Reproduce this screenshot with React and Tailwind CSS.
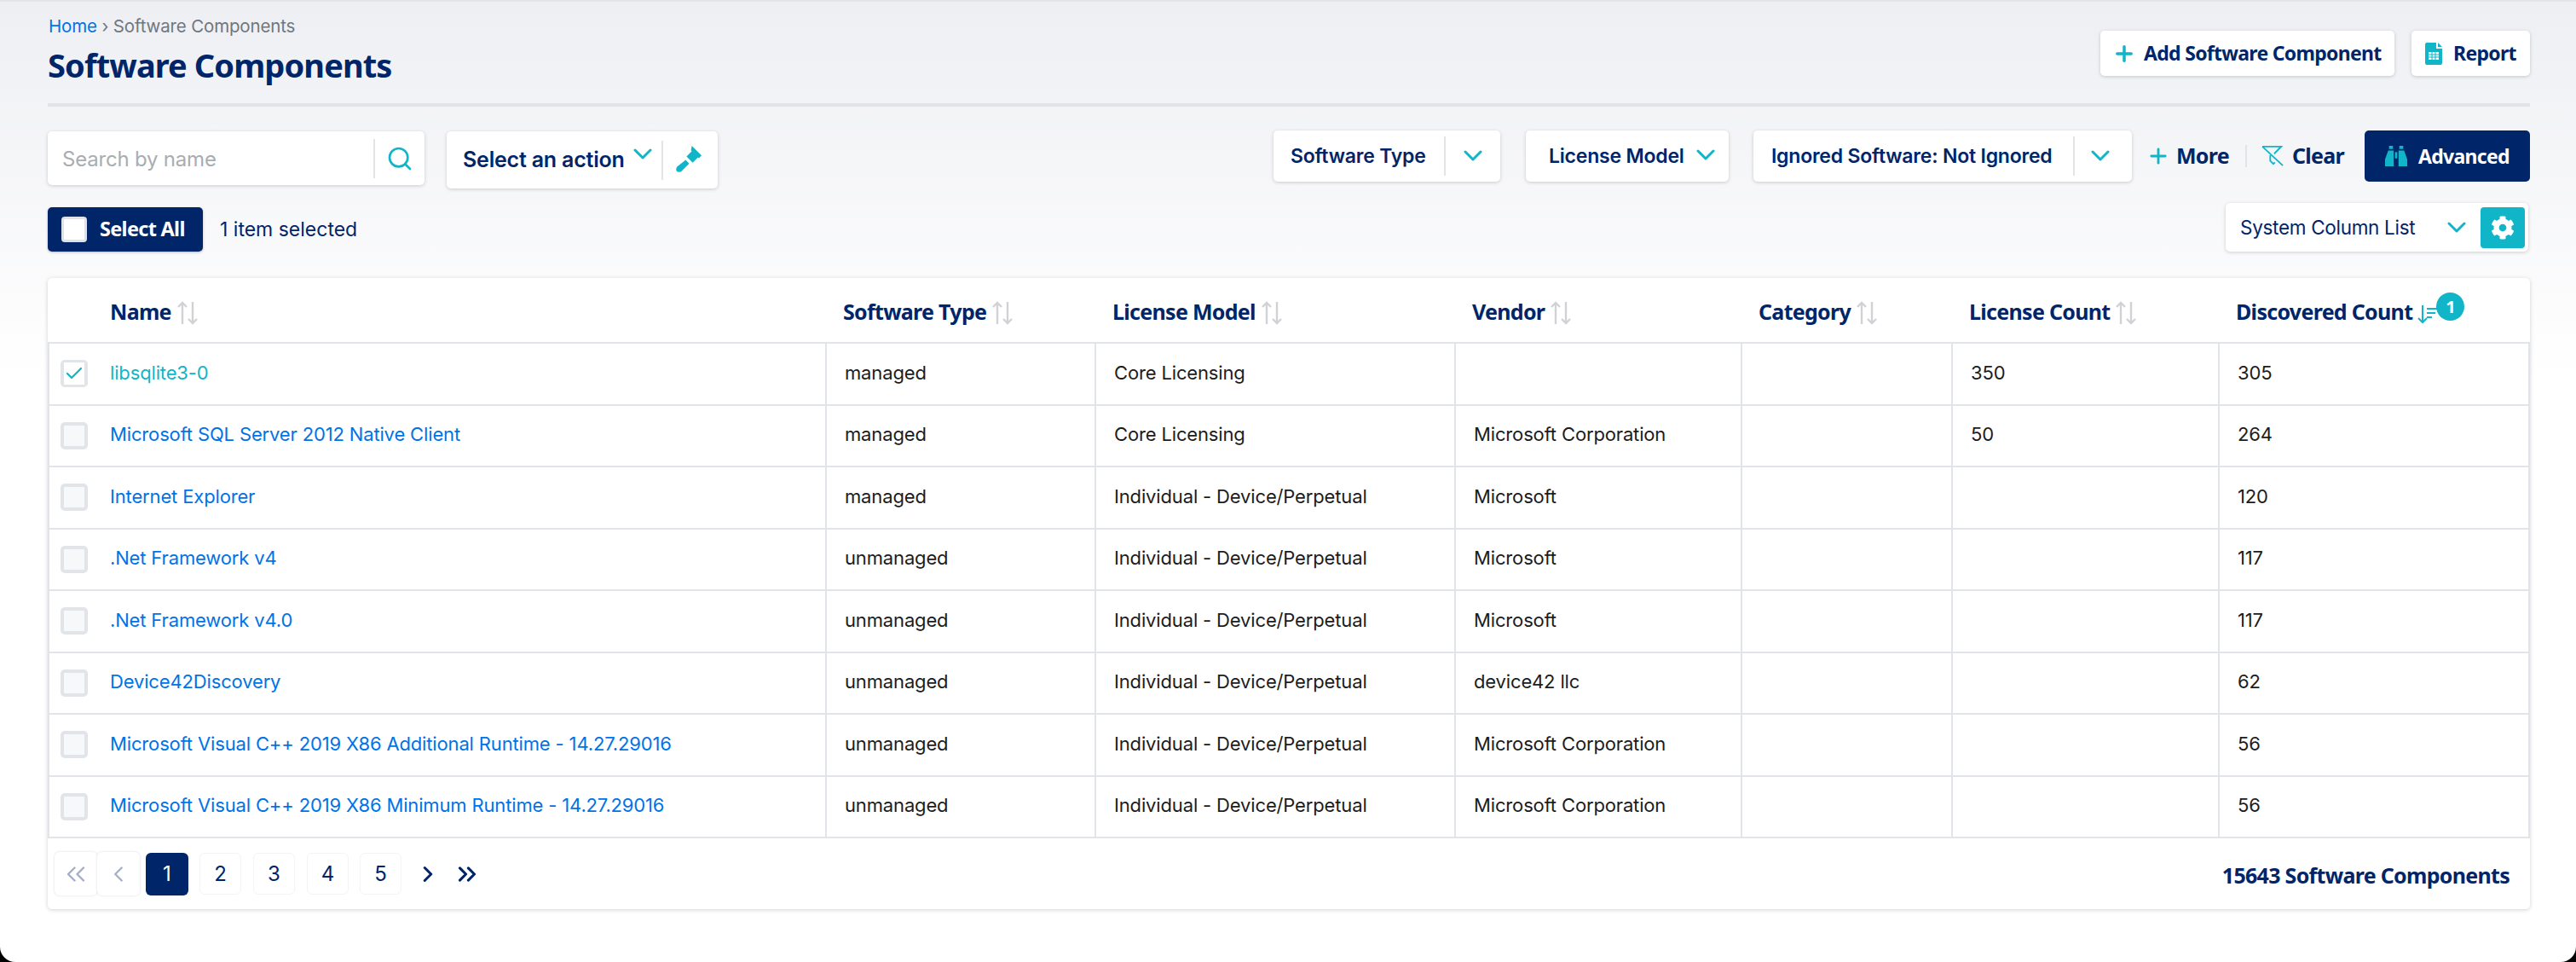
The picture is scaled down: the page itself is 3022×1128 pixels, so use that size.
import React from "react";
import { Plus, Search, Check, ChevronLeft, ChevronRight, ChevronsLeft, ChevronsRight } from "lucide-react";
import { FaCog } from "react-icons/fa";

const rows = [
	["libsqlite3-0", "managed", "Core Licensing", "", "", "350", "305"],
	["Microsoft SQL Server 2012 Native Client", "managed", "Core Licensing", "Microsoft Corporation", "", "50", "264"],
	["Internet Explorer", "managed", "Individual - Device/Perpetual", "Microsoft", "", "", "120"],
	[".Net Framework v4", "unmanaged", "Individual - Device/Perpetual", "Microsoft", "", "", "117"],
	[".Net Framework v4.0", "unmanaged", "Individual - Device/Perpetual", "Microsoft", "", "", "117"],
	["Device42Discovery", "unmanaged", "Individual - Device/Perpetual", "device42 llc", "", "", "62"],
	["Microsoft Visual C++ 2019 X86 Additional Runtime - 14.27.29016", "unmanaged", "Individual - Device/Perpetual", "Microsoft Corporation", "", "", "56"],
	["Microsoft Visual C++ 2019 X86 Minimum Runtime - 14.27.29016", "unmanaged", "Individual - Device/Perpetual", "Microsoft Corporation", "", "", "56"],
];

const cols = "grid grid-cols-[910px_316px_422px_336px_247px_313px_364px]";
const heading = "font-['Noto_Sans',sans-serif] font-bold tracking-[-0.7px]";

function Chevron() {
	return (
		<svg width="22" height="14" viewBox="0 0 22 14" fill="none" stroke="#10b5c8" strokeWidth="3" strokeLinecap="round" strokeLinejoin="round" className="shrink-0">
			<path d="M2 2l9 9 9-9" />
		</svg>
	);
}

function SortIcon() {
	return (
		<svg width="26" height="28" viewBox="0 0 26 28" fill="none" stroke="#d0d2d6" strokeWidth="2.4" className="ml-[6px] mt-[3px]">
			<path d="M7 27V2M2 7l5-5 5 5" />
			<path d="M19 1v25M14 21l5 5 5-5" />
		</svg>
	);
}

function SortDesc() {
	return (
		<svg width="24" height="24" viewBox="0 0 24 24" fill="none" stroke="#10b5c8" strokeWidth="2" className="ml-[6px] mt-[4px]">
			<path d="M6 2v20M1 17l5 5 5-5" />
			<path d="M11 6h13M11 11h10M11 16h6" />
		</svg>
	);
}

function Gavel() {
	return (
		<svg width="31" height="31" viewBox="0 0 30 30" fill="#10b5c8">
			<path d="M18 0l11 11-3 3-1-1-6 6-7-7 6-6-1-1z" />
			<path d="M11 16l4 4-9 9c-1 1-3 1-5 0-1-1-1-3 0-5z" />
		</svg>
	);
}

function ReportIcon() {
	return (
		<svg width="20" height="26" viewBox="0 0 20 26">
			<path d="M2 0h11v7h7v17a2 2 0 0 1-2 2H2a2 2 0 0 1-2-2V2a2 2 0 0 1 2-2z" fill="#10b5c8" />
			<path d="M15 0l5 5h-5z" fill="#10b5c8" />
			<path d="M4 11h12v9H4z" fill="#fff" />
			<path d="M4 14h12M4 17h12M8 11v9M12 11v9" stroke="#10b5c8" strokeWidth="1" />
		</svg>
	);
}

function ClearIcon() {
	return (
		<svg width="28" height="24" viewBox="0 0 30 26" fill="none" stroke="#10b5c8" strokeWidth="2">
			<path d="M1 1h24l-9 9" />
			<path d="M1 1l26 24" />
			<path d="M11 12v7l4 4 2-2" />
		</svg>
	);
}

function Binoculars() {
	return (
		<svg width="26" height="26" viewBox="0 0 28 26" fill="#10b5c8">
			<path d="M5 0h5v4H5zM18 0h5v4h-5z" />
			<path d="M4 6h7v20H0V17z" />
			<path d="M17 6h7l4 11v9H17z" />
			<path d="M12.500 8h3v8h-3z" />
		</svg>
	);
}

function Divider() {
	return <span className="w-[2px] h-[46px] bg-[#e2e4e8] shrink-0" />;
}

function Card({ className, children }) {
	return <div className={"bg-white rounded-[5px] shadow-[0_1px_4px_rgba(0,0,0,0.18)] flex items-center " + className}>{children}</div>;
}

function HeaderCell({ label, first, active }) {
	return (
		<div className={first ? "flex items-center pl-[73px] relative" : "flex items-center pl-[21px] relative"}>
			<span>{label}</span>
			{active ? <SortDesc /> : <SortIcon />}
			{active && (
				<span className="absolute left-[256px] top-[13px] w-[33px] h-[33px] rounded-full bg-[#10b5c8] text-white text-[20px] font-bold flex items-center justify-center">1</span>
			)}
		</div>
	);
}

function Row({ row, checked }) {
	return (
		<div className={cols + " h-[72.5px] border-b-2 border-x-2 border-[#e1e4e9] text-[22px] tracking-[-0.15px] text-[#1c1c1c]"}>
			<div className="flex items-center pl-[13px]">
				<span className="w-[32px] h-[32px] rounded-[5px] border-[4px] border-[#e1e4e9] bg-[#f7f8fa] flex items-center justify-center">
					{checked && <Check size={26} strokeWidth={2.2} className="text-[#10b5c8] bg-white" />}
				</span>
				<a className={checked ? "ml-[26px] pb-[2px] text-[#10b5c8]" : "ml-[26px] pb-[2px] text-[#0073e6]"}>{row[0]}</a>
			</div>
			{row.slice(1).map((cell, i) => (
				<div key={i} className="flex items-center pl-[21px] pb-[2px] border-l-2 border-[#e1e4e9]">{cell}</div>
			))}
		</div>
	);
}

function PageBtn({ children, active, muted }) {
	if (active) {
		return <span className="w-[50px] h-[50px] rounded-[6px] bg-[#002569] text-white flex items-center justify-center">{children}</span>;
	}
	if (muted) {
		return <span className="w-[50px] h-[51px] rounded-[6px] bg-white shadow-[0_0_3px_rgba(0,0,0,0.14)] text-[#a4aec6] flex items-center justify-center">{children}</span>;
	}
	return <span className="w-[49px] h-[49px] rounded-[6px] border border-[#f3f4f6] text-[#002569] flex items-center justify-center">{children}</span>;
}

export default function App() {
	return (
		<div className="w-[3022px] h-[1128px] bg-black font-['Inter',sans-serif]">
			<div className="h-full rounded-b-[18px] border-t-2 border-[#e2e4e8] bg-[linear-gradient(#eeeff3,#ffffff_440px)] pl-[56px] pr-[54px] text-[#002569]">
				{/* title */}
				<div className="flex justify-between h-[119px]">
					<div>
						<div className="mt-[17px] text-[20.500px] leading-[24px] tracking-[-0.15px] ml-px">
							<a className="text-[#0073e6]">Home</a>
							<span className="text-[#6f7780]"> › Software Components</span>
						</div>
						<h1 className={"mt-[8px] text-[38px] leading-[50px] tracking-[-0.9px] " + heading}>Software Components</h1>
					</div>
					<div className={"flex gap-[20px] mt-[34px] h-[53px] text-[23px] " + heading}>
						<Card className="w-[345px] pl-[14px]">
							<Plus size={28} strokeWidth={3} className="text-[#10b5c8] mr-[9px]" />
							Add Software Component
						</Card>
						<Card className="w-[139px] pl-[16px]">
							<ReportIcon />
							<span className="ml-[13px]">Report</span>
						</Card>
					</div>
				</div>
				<div className="h-[4px] bg-[#e0e3e7]" />

				{/* toolbar */}
				<div className="flex justify-between items-start mt-[28px] h-[85px]">
					<div className="flex items-start gap-[26px]">
						<Card className="w-[442px] h-[63px] mt-px">
							<span className="flex-1 pl-[17px] pt-[2px] text-[24px] tracking-[-0.2px] text-[#a9adb2]">Search by name</span>
							<Divider />
							<Search size={32} strokeWidth={2} className="text-[#10b5c8] mx-[13px]" />
						</Card>
						<Card className="w-[318px] h-[67px] mt-px">
							<span className="pl-[19px] w-[219px] text-[25px] tracking-[-0.2px] font-semibold whitespace-nowrap">Select an action</span>
							<span className="-mt-[14px] mr-[11px]"><Chevron /></span>
							<Divider />
							<span className="ml-[15px] -mt-[3px]"><Gavel /></span>
						</Card>
					</div>
					<div className="flex items-center h-[60px] text-[23px] font-semibold tracking-[-0.2px]">
						<Card className="w-[266px] h-[60px] pl-[20px]">
							<span className="w-[180px] whitespace-nowrap">Software Type</span>
							<Divider />
							<span className="ml-[21px]"><Chevron /></span>
						</Card>
						<Card className="w-[238px] h-[60px] pl-[27px] ml-[30px]">
							<span className="w-[173px] whitespace-nowrap">License Model</span>
							<span className="-mt-[3px]"><Chevron /></span>
						</Card>
						<Card className="w-[444px] h-[60px] pl-[21px] ml-[29px]">
							<span className="w-[354px] whitespace-nowrap">Ignored Software: Not Ignored</span>
							<Divider />
							<span className="ml-[19px]"><Chevron /></span>
						</Card>
						<div className={"flex items-center text-[25px] " + heading}>
							<Plus size={28} strokeWidth={2.4} className="text-[#10b5c8] ml-[17px] mr-[7px]" />
							<span>More</span>
							<span className="w-[2px] h-[26px] bg-[#e0e3e7] ml-[19px] mr-[17px]" />
							<ClearIcon />
							<span className="ml-[8px]">Clear</span>
							<div className="ml-[24px] w-[194px] h-[60px] rounded-[5px] bg-[#002569] text-white flex items-center pl-[24px] text-[23px]">
								<Binoculars />
								<span className="ml-[13px]">Advanced</span>
							</div>
						</div>
					</div>
				</div>

				<div className="flex justify-between items-start h-[57px]">
					<div className="flex items-center mt-[5px]">
						<div className={"w-[182px] h-[52px] rounded-[5px] bg-[#002569] text-white flex items-center pl-[16px] text-[23.500px] shadow-[0_1px_3px_rgba(0,0,0,0.25)] " + heading}>
							<span className="w-[30px] h-[30px] rounded-[4px] bg-white border-[3px] border-[#dfe2e8]" />
							<span className="ml-[15px]">Select All</span>
						</div>
						<span className="ml-[20px] text-[23px]">1 item selected</span>
					</div>
					<Card className="w-[355px] h-[57px] mr-[2px] pl-[17px] text-[22.500px] tracking-[-0.3px]">
						<span className="w-[243px] whitespace-nowrap">System Column List</span>
						<Chevron />
						<span className="ml-[17px] w-[52px] h-[48px] rounded-[4px] bg-[#10b5c8] flex items-center justify-center text-white"><FaCog size={28} /></span>
					</Card>
				</div>

				{/* table */}
				<div className="mt-[31px] bg-white rounded-[5px] shadow-[0_1px_5px_rgba(0,0,0,0.18)]">
					<div className={"grid grid-cols-[912px_316px_422px_336px_247px_313px_366px] h-[77px] border-b-2 border-[#e1e4e9] pt-[4px] text-[25px] " + heading}>
						<HeaderCell label="Name" first />
						<HeaderCell label="Software Type" />
						<HeaderCell label="License Model" />
						<HeaderCell label="Vendor" />
						<HeaderCell label="Category" />
						<HeaderCell label="License Count" />
						<HeaderCell label="Discovered Count" active />
					</div>
					{rows.map((row, i) => (
						<Row key={i} row={row} checked={i === 0} />
					))}
					<div className="flex items-center justify-between h-[83px] pl-[8px] pr-[24px]">
						<div className="flex items-center text-[24px]">
							<PageBtn muted><ChevronsLeft size={36} strokeWidth={1.6} /></PageBtn>
							<PageBtn muted><ChevronLeft size={30} strokeWidth={1.8} /></PageBtn>
							<span className="ml-[7px]"><PageBtn active>1</PageBtn></span>
							<span className="ml-[13px]"><PageBtn>2</PageBtn></span>
							<span className="ml-[14px]"><PageBtn>3</PageBtn></span>
							<span className="ml-[14px]"><PageBtn>4</PageBtn></span>
							<span className="ml-[13px]"><PageBtn>5</PageBtn></span>
							<ChevronRight size={30} strokeWidth={2.4} className="ml-[16px]" />
							<ChevronsRight size={34} strokeWidth={2.2} className="ml-[14px]" />
						</div>
						<span className={"text-[25px] mt-[4px] tracking-[-0.4px] " + heading}>15643 Software Components</span>
					</div>
				</div>
			</div>
		</div>
	);
}
